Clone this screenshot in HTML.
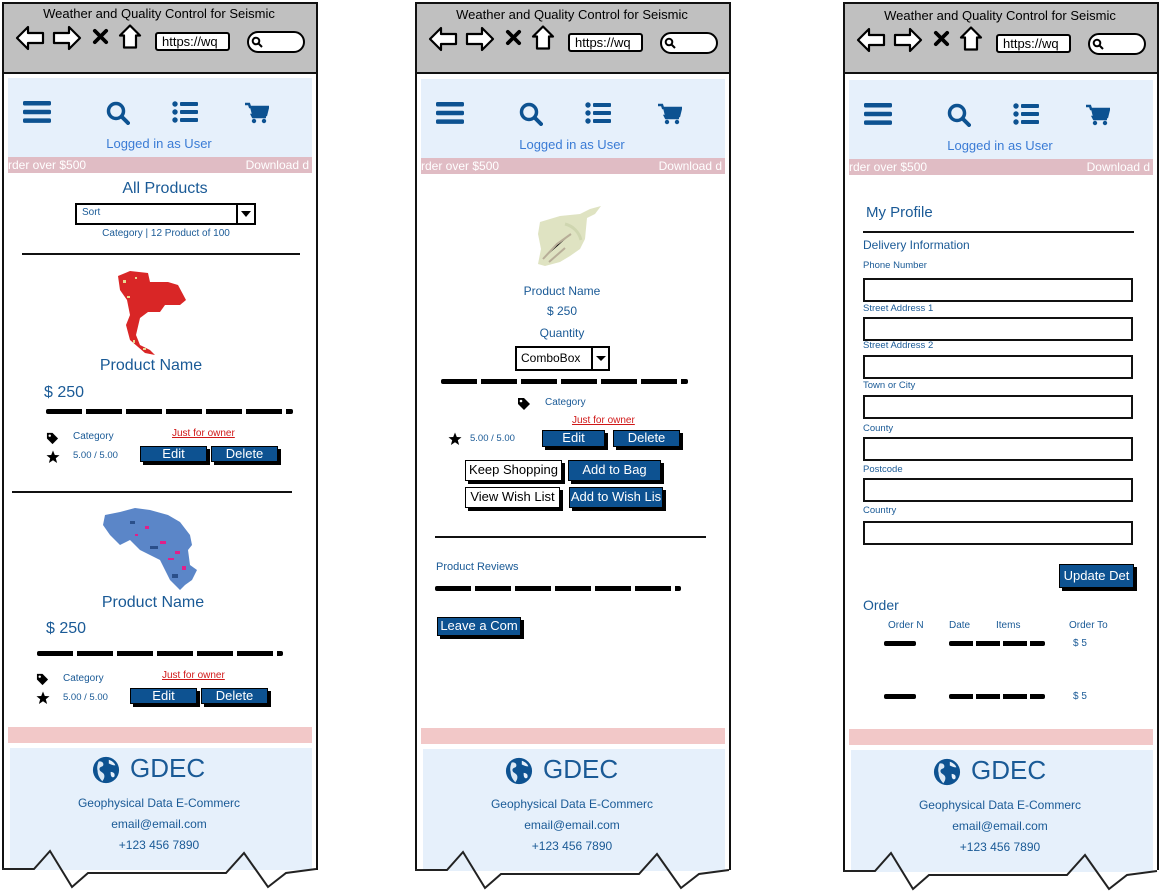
<!DOCTYPE html>
<html><head><meta charset="utf-8">
<style>
*{margin:0;padding:0;box-sizing:border-box}
body{width:1159px;height:891px;background:#fff;position:relative;overflow:hidden;font-family:"Liberation Sans",sans-serif;color:#1a5a96}
.a{position:absolute}
.t{position:absolute;white-space:nowrap;line-height:1}
.c{transform:translateX(-50%)}
.frame{position:absolute;top:2px;width:316px;height:868px;border:2px solid #111;border-bottom:none}
.hdr{position:absolute;top:2px;width:316px;height:72px;background:#c0c0c0;border:2px solid #111}
.nav{position:absolute;height:79px;background:#e6f0fb}
.mq{position:absolute;height:16px;background:#e0bcc4;color:#fff;font-size:12px;line-height:16px;overflow:hidden}
.pk{position:absolute;height:16px;background:#f2c8c8}
.ft{position:absolute;height:122px;background:#e6f0fb}
.btn{position:absolute;background:#0d5291;color:#fff;border:1.5px solid #000;box-shadow:3px 3px 0 #000;font-size:13px;text-align:center;line-height:14px;white-space:nowrap;overflow:hidden}
.wb{position:absolute;background:#fff;color:#000;border:1.5px solid #000;box-shadow:3px 3px 0 #000;font-size:13px;text-align:center;white-space:nowrap;overflow:hidden}
.sq{position:absolute;height:5px;background:repeating-linear-gradient(90deg,#000 0 36px,transparent 36px 40px);border-radius:2px}
.line{position:absolute;height:2px;background:#111}
.inp{position:absolute;left:863px;width:270px;height:24px;border:2px solid #111;background:#fff}
.lbl{position:absolute;left:863px;font-size:9.5px;white-space:nowrap;line-height:1}
.red{color:#d01818;text-decoration:underline;font-size:10px}
</style></head><body>
<svg width="0" height="0" style="position:absolute">
<defs>
<symbol id="back" viewBox="0 0 30 26"><polygon points="2,13 13,2 13,8 28,8 28,18 13,18 13,24" fill="#fff" stroke="#000" stroke-width="2.2" stroke-linejoin="round"/></symbol>
<symbol id="fwd" viewBox="0 0 30 26"><polygon points="28,13 17,2 17,8 2,8 2,18 17,18 17,24" fill="#fff" stroke="#000" stroke-width="2.2" stroke-linejoin="round"/></symbol>
<symbol id="x" viewBox="0 0 18 18"><path d="M3 3L15 15M15 3L3 15" stroke="#000" stroke-width="4" stroke-linecap="round"/></symbol>
<symbol id="home" viewBox="0 0 24 26"><polygon points="12,2 22,12 18,12 18,24 6,24 6,12 2,12" fill="#fff" stroke="#000" stroke-width="2.2" stroke-linejoin="round"/></symbol>
<symbol id="ham" viewBox="0 0 28 22"><rect x="0" y="0" width="28" height="4.5" rx="1.5" fill="#0d5291"/><rect x="0" y="8.7" width="28" height="4.5" rx="1.5" fill="#0d5291"/><rect x="0" y="17.4" width="28" height="4.5" rx="1.5" fill="#0d5291"/></symbol>
<symbol id="srch" viewBox="0 0 24 24"><circle cx="10" cy="10" r="7.5" fill="none" stroke="#0d5291" stroke-width="3.5"/><path d="M15.5 15.5L22 22" stroke="#0d5291" stroke-width="4" stroke-linecap="round"/></symbol>
<symbol id="list" viewBox="0 0 26 22"><circle cx="3" cy="3" r="2.7" fill="#0d5291"/><circle cx="3" cy="11" r="2.7" fill="#0d5291"/><circle cx="3" cy="19" r="2.7" fill="#0d5291"/><rect x="8" y="1" width="18" height="4" rx="1" fill="#0d5291"/><rect x="8" y="9" width="18" height="4" rx="1" fill="#0d5291"/><rect x="8" y="17" width="18" height="4" rx="1" fill="#0d5291"/></symbol>
<symbol id="cart" viewBox="0 0 24 22"><path d="M0 2H4L5 5H23L21 13H7L8 15H21" fill="none" stroke="#0d5291" stroke-width="2.5"/><path d="M5 5H23L21 13H7Z" fill="#0d5291"/><circle cx="9" cy="19" r="2.2" fill="#0d5291"/><circle cx="19" cy="19" r="2.2" fill="#0d5291"/></symbol>
<symbol id="tag" viewBox="0 0 14 14"><path d="M1 1H7L13 7L7 13L1 7Z" fill="#000"/><circle cx="4" cy="4" r="1.3" fill="#fff"/></symbol>
<symbol id="star" viewBox="0 0 14 14"><polygon points="7,0.5 8.8,5 13.5,5.2 9.8,8.2 11.1,13 7,10.3 2.9,13 4.2,8.2 0.5,5.2 5.2,5" fill="#000"/></symbol>
<symbol id="globe" viewBox="0 0 30 30"><circle cx="15" cy="15" r="14" fill="#0d5291"/><path d="M7 6C10 5 13 7 12 10C11 12 8 11 8 14C8 17 12 17 13 20C14 23 12 26 11 27C8 24 6 20 6 16C5 12 6 9 7 6Z" fill="#e6f0fb" opacity=".95"/><path d="M18 4C21 5 24 7 25 10C22 10 20 9 18 8Z" fill="#e6f0fb"/><path d="M20 17C23 17 25 19 24 22C22 24 20 22 20 19Z" fill="#e6f0fb"/></symbol>
</defs></svg>

<!-- ================= FRAME 1 ================= -->
<div class="frame" style="left:2px"></div>
<div class="hdr" style="left:2px"></div>
<div class="t c" style="left:159px;top:7px;font-size:13px;color:#000">Weather and Quality Control for Seismic</div>
<svg class="a" style="left:15px;top:25px" width="30" height="26"><use href="#back"/></svg>
<svg class="a" style="left:52px;top:25px" width="30" height="26"><use href="#fwd"/></svg>
<svg class="a" style="left:92px;top:28px" width="17" height="17"><use href="#x"/></svg>
<svg class="a" style="left:118px;top:23px" width="24" height="27"><use href="#home"/></svg>
<div class="a" style="left:155px;top:32px;width:75px;height:19px;border:2px solid #000;border-radius:3px;background:#fff;font-size:13px;color:#000;line-height:15px;padding-left:5px">https://wq</div>
<div class="a" style="left:247px;top:31px;width:58px;height:22px;border:2px solid #000;border-radius:11px;background:#fff"></div>
<svg class="a" style="left:251px;top:36px" width="12" height="12"><circle cx="5" cy="5" r="3.3" fill="none" stroke="#000" stroke-width="2"/><path d="M7.5 7.5L11 11" stroke="#000" stroke-width="2"/></svg>
<div class="nav" style="left:8px;top:78px;width:304px"></div>
<svg class="a" style="left:23px;top:101px" width="28" height="22"><use href="#ham"/></svg>
<svg class="a" style="left:106px;top:101px" width="24" height="24"><use href="#srch"/></svg>
<svg class="a" style="left:172px;top:101px" width="26" height="22"><use href="#list"/></svg>
<svg class="a" style="left:245px;top:102px" width="24" height="22"><use href="#cart"/></svg>
<div class="t c" style="left:159px;top:137px;font-size:13px;color:#3a7bd5">Logged in as User</div>
<div class="mq" style="left:8px;top:157px;width:304px"><span style="position:absolute;left:0">rder over $500</span><span style="position:absolute;right:3px">Download d</span></div>

<div class="t c" style="left:165px;top:181px;font-size:16px">All Products</div>
<div class="a" style="left:75px;top:203px;width:181px;height:22px;border:2px solid #000;background:#fff;font-size:10px;line-height:16px;padding-left:5px">Sort<div class="a" style="right:0;top:0;width:18px;height:18px;border-left:2px solid #000"><div class="a" style="left:3px;top:6px;border-left:5px solid transparent;border-right:5px solid transparent;border-top:6px solid #000"></div></div></div>
<div class="t c" style="left:166px;top:229px;font-size:10px">Category | 12 Product of 100</div>
<div class="line" style="left:22px;top:253px;width:278px"></div>

<svg class="a" style="left:115px;top:268px" width="75" height="90"><polygon points="3,8 15,3 33,5 35,14 53,14 63,17 71,32 65,37 50,37 45,44 33,44 25,50 21,67 25,77 35,82 40,87 30,85 15,72 11,57 15,47 12,32 5,22" fill="#d92626"/><g fill="#e8d890"><rect x="8" y="12" width="3" height="3"/><rect x="20" y="9" width="2" height="2"/><rect x="12" y="28" width="3" height="2"/><rect x="18" y="72" width="2" height="3"/><rect x="28" y="80" width="3" height="2"/></g></svg>
<div class="t c" style="left:151px;top:358px;font-size:16px">Product Name</div>
<div class="t" style="left:44px;top:385px;font-size:16px">$ 250</div>
<div class="sq" style="left:46px;top:409px;width:247px"></div>
<svg class="a" style="left:46px;top:432px" width="13" height="13"><use href="#tag"/></svg>
<div class="t" style="left:73px;top:432px;font-size:10px">Category</div>
<div class="t red" style="left:172px;top:429px">Just for owner</div>
<svg class="a" style="left:46px;top:450px" width="14" height="14"><use href="#star"/></svg>
<div class="t" style="left:73px;top:451px;font-size:9.5px">5.00 / 5.00</div>
<div class="btn" style="left:140px;top:446px;width:67px;height:16px">Edit</div>
<div class="btn" style="left:211px;top:446px;width:67px;height:16px">Delete</div>
<div class="line" style="left:12px;top:491px;width:280px"></div>

<svg class="a" style="left:100px;top:506px" width="100" height="86"><polygon points="5,9 20,6 35,2 50,4 68,9 80,16 90,29 92,39 88,44 90,59 97,64 92,74 85,79 80,84 70,74 60,54 40,44 30,34 20,39 10,29 3,19" fill="#5b86c8"/><g fill="#e0208a"><rect x="45" y="20" width="4" height="3"/><rect x="60" y="35" width="6" height="3"/><rect x="75" y="45" width="5" height="3"/><rect x="82" y="60" width="4" height="4"/><rect x="35" y="28" width="3" height="2"/><rect x="68" y="52" width="6" height="2"/></g><g fill="#2a4f8a"><rect x="30" y="15" width="5" height="3"/><rect x="50" y="40" width="8" height="3"/><rect x="72" y="68" width="6" height="4"/></g></svg>
<div class="t c" style="left:153px;top:595px;font-size:16px">Product Name</div>
<div class="t" style="left:46px;top:621px;font-size:16px">$ 250</div>
<div class="sq" style="left:37px;top:651px;width:246px"></div>
<svg class="a" style="left:36px;top:673px" width="13" height="13"><use href="#tag"/></svg>
<div class="t" style="left:63px;top:674px;font-size:10px">Category</div>
<div class="t red" style="left:162px;top:671px">Just for owner</div>
<svg class="a" style="left:36px;top:691px" width="14" height="14"><use href="#star"/></svg>
<div class="t" style="left:63px;top:693px;font-size:9.5px">5.00 / 5.00</div>
<div class="btn" style="left:130px;top:688px;width:67px;height:16px">Edit</div>
<div class="btn" style="left:201px;top:688px;width:67px;height:16px">Delete</div>

<div class="pk" style="left:8px;top:727px;width:304px"></div>
<div class="ft" style="left:10px;top:748px;width:302px"></div>
<svg class="a" style="left:92px;top:756px" width="28" height="28"><use href="#globe"/></svg>
<div class="t" style="left:130px;top:755px;font-size:26px">GDEC</div>
<div class="t c" style="left:159px;top:797px;font-size:12px">Geophysical Data E-Commerc</div>
<div class="t c" style="left:159px;top:818px;font-size:12px">email@email.com</div>
<div class="t c" style="left:159px;top:839px;font-size:12px">+123 456 7890</div>
<svg class="a" style="left:0;top:845px" width="320" height="46"><polyline points="2,24 34,24 50,6 72,42 88,28 226,28 244,8 268,42 286,28 316,24" fill="none" stroke="#222" stroke-width="2"/></svg>

<!-- ================= FRAME 2 ================= -->
<div class="frame" style="left:415px"></div>
<div class="hdr" style="left:415px"></div>
<div class="t c" style="left:572px;top:8px;font-size:13px;color:#000">Weather and Quality Control for Seismic</div>
<svg class="a" style="left:428px;top:26px" width="30" height="26"><use href="#back"/></svg>
<svg class="a" style="left:465px;top:26px" width="30" height="26"><use href="#fwd"/></svg>
<svg class="a" style="left:505px;top:29px" width="17" height="17"><use href="#x"/></svg>
<svg class="a" style="left:531px;top:24px" width="24" height="27"><use href="#home"/></svg>
<div class="a" style="left:568px;top:33px;width:75px;height:19px;border:2px solid #000;border-radius:3px;background:#fff;font-size:13px;color:#000;line-height:15px;padding-left:5px">https://wq</div>
<div class="a" style="left:660px;top:32px;width:58px;height:22px;border:2px solid #000;border-radius:11px;background:#fff"></div>
<svg class="a" style="left:664px;top:37px" width="12" height="12"><circle cx="5" cy="5" r="3.3" fill="none" stroke="#000" stroke-width="2"/><path d="M7.5 7.5L11 11" stroke="#000" stroke-width="2"/></svg>
<div class="nav" style="left:421px;top:79px;width:304px"></div>
<svg class="a" style="left:436px;top:102px" width="28" height="22"><use href="#ham"/></svg>
<svg class="a" style="left:519px;top:102px" width="24" height="24"><use href="#srch"/></svg>
<svg class="a" style="left:585px;top:102px" width="26" height="22"><use href="#list"/></svg>
<svg class="a" style="left:658px;top:103px" width="24" height="22"><use href="#cart"/></svg>
<div class="t c" style="left:572px;top:138px;font-size:13px;color:#3a7bd5">Logged in as User</div>
<div class="mq" style="left:421px;top:158px;width:304px"><span style="position:absolute;left:0">rder over $500</span><span style="position:absolute;right:3px">Download d</span></div>

<svg class="a" style="left:535px;top:204px" width="68" height="66"><polygon points="5,18 25,12 45,10 55,5 66,2 60,10 52,14 50,35 45,45 35,52 25,58 10,62 3,60 6,45 3,30" fill="#dfe3c2"/><path d="M8 55L22 40L36 30M14 58L30 44" stroke="#b8ae98" stroke-width="2"/><path d="M30 20C38 22 44 28 46 36" stroke="#cfd6b0" stroke-width="3" fill="none"/></svg>
<div class="t c" style="left:562px;top:285px;font-size:12px">Product Name</div>
<div class="t c" style="left:562px;top:305px;font-size:12px">$ 250</div>
<div class="t c" style="left:562px;top:327px;font-size:12px">Quantity</div>
<div class="a" style="left:515px;top:346px;width:95px;height:25px;border:2px solid #000;background:#fff;font-size:12px;color:#000;line-height:20px;padding-left:4px">ComboBox<div class="a" style="right:0;top:0;width:17px;height:21px;border-left:2px solid #000"><div class="a" style="left:3px;top:8px;border-left:5px solid transparent;border-right:5px solid transparent;border-top:5px solid #000"></div></div></div>
<div class="sq" style="left:441px;top:379px;width:247px"></div>
<svg class="a" style="left:517px;top:397px" width="14" height="14"><use href="#tag"/></svg>
<div class="t" style="left:545px;top:398px;font-size:10px">Category</div>
<div class="t red" style="left:572px;top:416px">Just for owner</div>
<svg class="a" style="left:448px;top:432px" width="14" height="14"><use href="#star"/></svg>
<div class="t" style="left:470px;top:434px;font-size:9.5px">5.00 / 5.00</div>
<div class="btn" style="left:542px;top:430px;width:63px;height:17px">Edit</div>
<div class="btn" style="left:613px;top:430px;width:67px;height:17px">Delete</div>
<div class="wb" style="left:465px;top:460px;width:97px;height:21px;line-height:18px">Keep Shopping</div>
<div class="btn" style="left:568px;top:460px;width:93px;height:21px;line-height:18px">Add to Bag</div>
<div class="wb" style="left:465px;top:487px;width:95px;height:21px;line-height:18px">View Wish List</div>
<div class="btn" style="left:569px;top:487px;width:94px;height:21px;line-height:18px">Add to Wish Lis</div>
<div class="line" style="left:435px;top:536px;width:271px"></div>
<div class="t" style="left:436px;top:562px;font-size:11px">Product Reviews</div>
<div class="sq" style="left:435px;top:586px;width:246px"></div>
<div class="btn" style="left:437px;top:617px;width:84px;height:19px;line-height:16px">Leave a Com</div>

<div class="pk" style="left:421px;top:728px;width:304px"></div>
<div class="ft" style="left:423px;top:749px;width:302px"></div>
<svg class="a" style="left:505px;top:757px" width="28" height="28"><use href="#globe"/></svg>
<div class="t" style="left:543px;top:756px;font-size:26px">GDEC</div>
<div class="t c" style="left:572px;top:798px;font-size:12px">Geophysical Data E-Commerc</div>
<div class="t c" style="left:572px;top:819px;font-size:12px">email@email.com</div>
<div class="t c" style="left:572px;top:840px;font-size:12px">+123 456 7890</div>
<svg class="a" style="left:413px;top:846px" width="320" height="45"><polyline points="2,24 34,24 50,6 72,42 88,28 226,28 244,8 268,42 286,28 316,24" fill="none" stroke="#222" stroke-width="2"/></svg>

<!-- ================= FRAME 3 ================= -->
<div class="frame" style="left:843px"></div>
<div class="hdr" style="left:843px"></div>
<div class="t c" style="left:1000px;top:9px;font-size:13px;color:#000">Weather and Quality Control for Seismic</div>
<svg class="a" style="left:856px;top:27px" width="30" height="26"><use href="#back"/></svg>
<svg class="a" style="left:893px;top:27px" width="30" height="26"><use href="#fwd"/></svg>
<svg class="a" style="left:933px;top:30px" width="17" height="17"><use href="#x"/></svg>
<svg class="a" style="left:959px;top:25px" width="24" height="27"><use href="#home"/></svg>
<div class="a" style="left:996px;top:34px;width:75px;height:19px;border:2px solid #000;border-radius:3px;background:#fff;font-size:13px;color:#000;line-height:15px;padding-left:5px">https://wq</div>
<div class="a" style="left:1088px;top:33px;width:58px;height:22px;border:2px solid #000;border-radius:11px;background:#fff"></div>
<svg class="a" style="left:1092px;top:38px" width="12" height="12"><circle cx="5" cy="5" r="3.3" fill="none" stroke="#000" stroke-width="2"/><path d="M7.5 7.5L11 11" stroke="#000" stroke-width="2"/></svg>
<div class="nav" style="left:849px;top:80px;width:304px"></div>
<svg class="a" style="left:864px;top:103px" width="28" height="22"><use href="#ham"/></svg>
<svg class="a" style="left:947px;top:103px" width="24" height="24"><use href="#srch"/></svg>
<svg class="a" style="left:1013px;top:103px" width="26" height="22"><use href="#list"/></svg>
<svg class="a" style="left:1086px;top:104px" width="24" height="22"><use href="#cart"/></svg>
<div class="t c" style="left:1000px;top:139px;font-size:13px;color:#3a7bd5">Logged in as User</div>
<div class="mq" style="left:849px;top:159px;width:304px"><span style="position:absolute;left:0">rder over $500</span><span style="position:absolute;right:3px">Download d</span></div>

<div class="t" style="left:866px;top:205px;font-size:15px">My Profile</div>
<div class="line" style="left:863px;top:231px;width:271px"></div>
<div class="t" style="left:863px;top:239px;font-size:12px">Delivery Information</div>
<div class="lbl" style="top:261px">Phone Number</div>
<div class="inp" style="top:278px"></div>
<div class="lbl" style="top:304px">Street Address 1</div>
<div class="inp" style="top:317px"></div>
<div class="lbl" style="top:341px">Street Address 2</div>
<div class="inp" style="top:355px"></div>
<div class="lbl" style="top:381px">Town or City</div>
<div class="inp" style="top:395px"></div>
<div class="lbl" style="top:424px">County</div>
<div class="inp" style="top:437px"></div>
<div class="lbl" style="top:465px">Postcode</div>
<div class="inp" style="top:478px"></div>
<div class="lbl" style="top:506px">Country</div>
<div class="inp" style="top:521px"></div>
<div class="btn" style="left:1059px;top:564px;width:75px;height:24px;line-height:21px">Update Det</div>
<div class="t" style="left:863px;top:598px;font-size:14px">Order</div>
<div class="t" style="left:888px;top:621px;font-size:10px">Order N</div>
<div class="t" style="left:949px;top:621px;font-size:10px">Date</div>
<div class="t" style="left:996px;top:621px;font-size:10px">Items</div>
<div class="t" style="left:1069px;top:621px;font-size:10px">Order To</div>
<div class="sq" style="left:884px;top:641px;width:32px"></div>
<div class="sq" style="left:949px;top:641px;width:96px;background:repeating-linear-gradient(90deg,#000 0 24px,transparent 24px 27px)"></div>
<div class="t" style="left:1073px;top:639px;font-size:10px">$ 5</div>
<div class="sq" style="left:884px;top:694px;width:32px"></div>
<div class="sq" style="left:949px;top:694px;width:96px;background:repeating-linear-gradient(90deg,#000 0 24px,transparent 24px 27px)"></div>
<div class="t" style="left:1073px;top:692px;font-size:10px">$ 5</div>

<div class="pk" style="left:849px;top:729px;width:304px"></div>
<div class="ft" style="left:851px;top:750px;width:302px"></div>
<svg class="a" style="left:933px;top:758px" width="28" height="28"><use href="#globe"/></svg>
<div class="t" style="left:971px;top:757px;font-size:26px">GDEC</div>
<div class="t c" style="left:1000px;top:799px;font-size:12px">Geophysical Data E-Commerc</div>
<div class="t c" style="left:1000px;top:820px;font-size:12px">email@email.com</div>
<div class="t c" style="left:1000px;top:841px;font-size:12px">+123 456 7890</div>
<svg class="a" style="left:841px;top:847px" width="318" height="44"><polyline points="2,24 34,24 50,6 72,42 88,28 226,28 244,8 268,42 286,28 316,24" fill="none" stroke="#222" stroke-width="2"/></svg>
</body></html>
